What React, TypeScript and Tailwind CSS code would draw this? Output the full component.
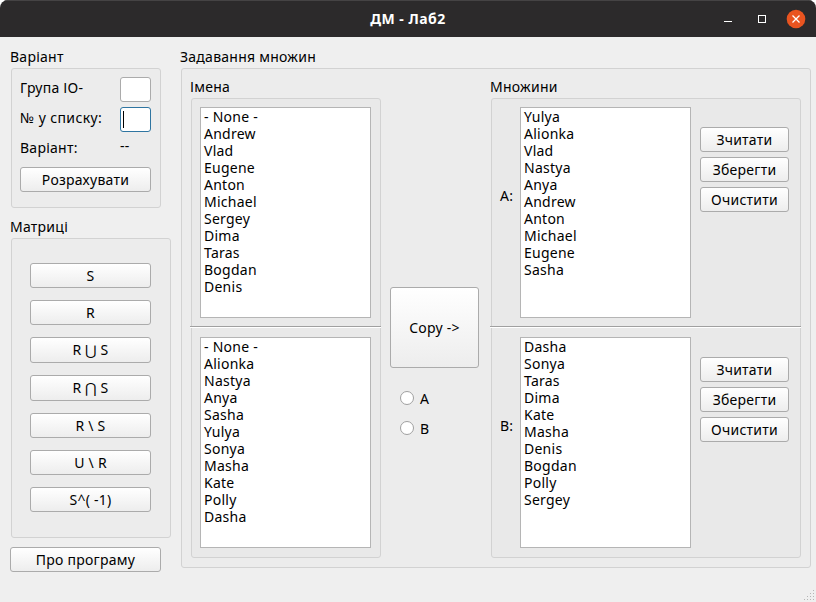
import type { ReactNode } from "react";

const names = ["- None -", "Andrew", "Vlad", "Eugene", "Anton", "Michael", "Sergey", "Dima", "Taras", "Bogdan", "Denis"];
const femaleNames = ["- None -", "Alionka", "Nastya", "Anya", "Sasha", "Yulya", "Sonya", "Masha", "Kate", "Polly", "Dasha"];
const setA = ["Yulya", "Alionka", "Vlad", "Nastya", "Anya", "Andrew", "Anton", "Michael", "Eugene", "Sasha"];
const setB = ["Dasha", "Sonya", "Taras", "Dima", "Kate", "Masha", "Denis", "Bogdan", "Polly", "Sergey"];

function Button({ children, className = "h-[25px]" }: { children: ReactNode; className?: string }) {
  return (
    <button
      className={`flex w-full shrink-0 items-center justify-center rounded-[3px] border border-[#ababab] bg-linear-to-b from-white to-[#ededed] leading-none tracking-[0.25px] whitespace-pre ${className}`}
    >
      {children}
    </button>
  );
}

function GroupBox({ title, className, children }: { title: string; className: string; children: ReactNode }) {
  return (
    <section className="flex flex-col">
      <h2 className="h-[21px] leading-[20px] whitespace-nowrap">{title}</h2>
      <div className={`ml-px rounded-[3px] border border-[#d2d2d2] bg-black/[0.013] ${className}`}>{children}</div>
    </section>
  );
}

function List({ items }: { items: string[] }) {
  return (
    <ul className="h-[211px] w-[171px] shrink-0 border border-[#b5b5b5] bg-white pl-[3px]">
      {items.map((item) => (
        <li key={item} className="h-[17px] leading-[17px] whitespace-pre">{item}</li>
      ))}
    </ul>
  );
}

function Separator() {
  return <div className="my-2 -mr-[10px] -ml-[10px] h-[3px] shrink-0 border-t border-[#a0a0a0] shadow-[inset_0_1px_0_white]" />;
}

function SetRow({ label, items }: { label: string; items: string[] }) {
  return (
    <div className="flex h-[211px]">
      <span className="mt-[79px] w-5 leading-[20px]">{label}</span>
      <List items={items} />
      <div className="mt-5 ml-[9px] flex w-[89px] flex-col gap-[5px]">
        <Button>Зчитати</Button>
        <Button>Зберегти</Button>
        <Button>Очистити</Button>
      </div>
    </div>
  );
}

function Radio({ label }: { label: string }) {
  return (
    <label className="flex h-[30px] items-center gap-[6px] pl-[10px]">
      <span className="size-[14px] rounded-full border border-[#a0a0a0] bg-white" />
      <span className="pt-px leading-none">{label}</span>
    </label>
  );
}

export default function App() {
  return (
    <div className="h-[602px] w-[816px] overflow-hidden bg-white font-['Noto_Sans',sans-serif] text-[14px] tracking-[0.25px] text-black">
      <div className="flex h-full flex-col overflow-hidden rounded-t-lg bg-[#efefef]">
        <header className="grid h-[37px] shrink-0 grid-cols-[1fr_auto_1fr] items-center border-t border-[#454344] bg-[#2c2a2b] text-white">
          <span />
          <h1 className="text-[14px] leading-none font-bold tracking-[0.5px]">ДМ - Лаб2</h1>
          <svg className="ml-auto" width="106" height="36" viewBox="710 1 106 36" fill="none">
            <path d="M724 21.5H732" stroke="white" />
            <rect x="758.5" y="15.5" width="7" height="7" stroke="white" />
            <circle cx="796" cy="19" r="9.3" fill="#e95420" />
            <path d="M792.5 15.5L799.5 22.5M799.5 15.5L792.5 22.5" stroke="white" strokeWidth="1.3" />
          </svg>
        </header>

        <main className="flex flex-1 gap-[9px] pt-[10px] pl-[10px]">
          <aside className="flex w-[161px] flex-col">
            <GroupBox title="Варіант" className="h-[140px] w-[150px] px-2 pt-2">
              <div className="flex h-[30px] justify-between">
                <span className="leading-[22px]">Група ІО-</span>
                <span className="mr-px h-[25px] w-[31px] rounded-[3px] border border-[#ababab] bg-white" />
              </div>
              <div className="flex h-[30px] justify-between">
                <span className="leading-[22px] tracking-[0.38px]">№ у списку:</span>
                <span className="mr-px h-[25px] w-[31px] rounded-[3px] border border-[#2f75a1] bg-white pt-[3px] pl-[2px]">
                  <span className="block h-[17px] w-px bg-black" />
                </span>
              </div>
              <div className="flex h-[30px]">
                <span className="w-[100px] leading-[22px]">Варіант:</span>
                <span className="leading-[18px]">--</span>
              </div>
              <div className="w-[131px]">
                <Button>Розрахувати</Button>
              </div>
            </GroupBox>
            <div className="mt-[9px]">
              <GroupBox title="Матриці" className="flex h-[300px] w-[160px] flex-col gap-3 pt-6 pr-[19px] pl-[18px]">
                <Button>S</Button>
                <Button>R</Button>
                <Button className="h-[26px]">R ⋃ S</Button>
                <Button className="h-[26px]">R ⋂ S</Button>
                <Button>R \ S</Button>
                <Button>U \ R</Button>
                <Button>S^( -1)</Button>
              </GroupBox>
            </div>
            <div className="mt-[9px] w-[151px]">
              <Button>Про програму</Button>
            </div>
          </aside>

          <GroupBox title="Задавання множин" className="flex h-[500px] w-[630px] pt-2 pl-2">
            <GroupBox title="Імена" className="flex h-[460px] w-[190px] flex-col pt-2 pr-[9px] pl-2">
              <List items={names} />
              <Separator />
              <List items={femaleNames} />
            </GroupBox>
            <div className="mt-[210px] ml-[9px] w-[100px]">
              <div className="mb-[15px] w-[89px]">
                <Button className="h-[81px]">{"Copy ->"}</Button>
              </div>
              <Radio label="A" />
              <Radio label="B" />
            </div>
            <GroupBox title="Множини" className="flex h-[460px] w-[310px] flex-col pt-2 pr-[9px] pl-2">
              <SetRow label="A:" items={setA} />
              <Separator />
              <SetRow label="B:" items={setB} />
            </GroupBox>
          </GroupBox>
        </main>
        <svg className="mt-auto ml-auto shrink-0" width="14" height="14" viewBox="0 0 14 14" fill="#b5b5b5">
          <path d="M11 2h1v1h-1zM8 5h1v1H8zM11 5h1v1h-1zM5 8h1v1H5zM8 8h1v1H8zM11 8h1v1h-1zM2 11h1v1H2zM5 11h1v1H5zM8 11h1v1H8zM11 11h1v1h-1z" />
        </svg>
      </div>
    </div>
  );
}
